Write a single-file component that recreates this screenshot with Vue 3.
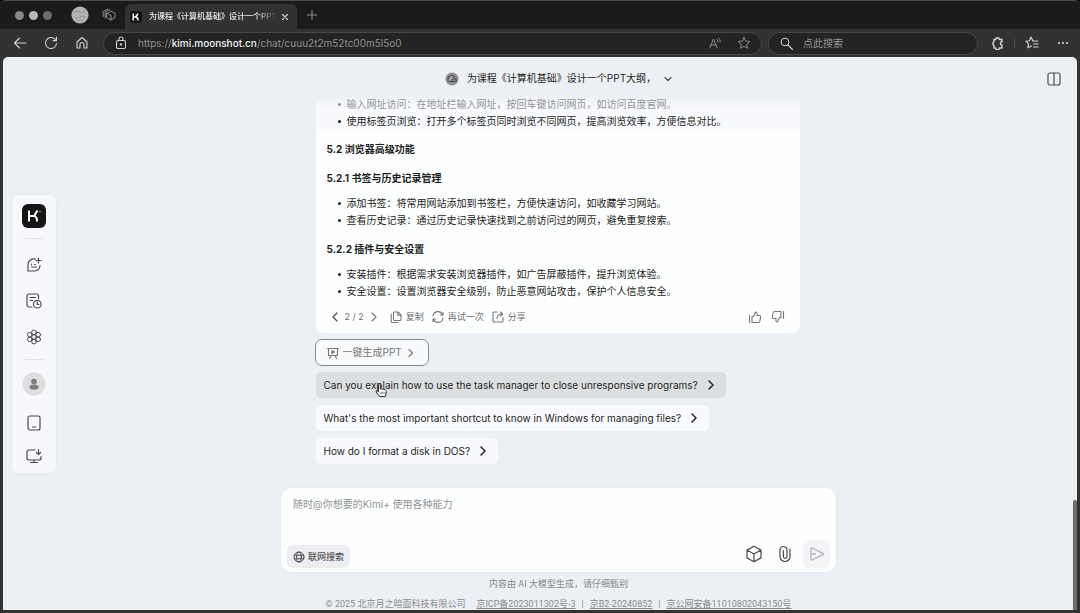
<script setup>
import { ref } from 'vue'

const draft = ref('')
const query = ref('')

const intro = [
  '输入网址访问：在地址栏输入网址，按回车键访问网页，如访问百度官网。',
  '使用标签页浏览：打开多个标签页同时浏览不同网页，提高浏览效率，方便信息对比。'
]
const bookmarks = [
  '添加书签：将常用网站添加到书签栏，方便快速访问，如收藏学习网站。',
  '查看历史记录：通过历史记录快速找到之前访问过的网页，避免重复搜索。'
]
const plugins = [
  '安装插件：根据需求安装浏览器插件，如广告屏蔽插件，提升浏览体验。',
  '安全设置：设置浏览器安全级别，防止恶意网站攻击，保护个人信息安全。'
]
const questions = [
  { text: 'Can you explain how to use the task manager to close unresponsive programs?', hovered: true },
  { text: "What's the most important shortcut to know in Windows for managing files?", hovered: false },
  { text: 'How do I format a disk in DOS?', hovered: false }
]
</script>

<template>
  <div class="window">
    <div class="tabs">
      <div class="lights"><i class="light"></i><i class="light bright"></i><i class="light dim"></i></div>
      <button class="bare profile" aria-label="个人资料">
        <svg width="18" height="18" viewBox="0 0 18 18"><circle cx="9" cy="9" r="8.6" fill="#b4b4b4" /><path d="M2 7q4-3 7-1t6-2M3 11q3 2 6 0t6 1M6 15q3-2 6 0" fill="none" stroke="#989898" stroke-width="1.2" /></svg>
      </button>
      <button class="bare spaces" aria-label="工作区">
        <svg class="line" width="14" height="14" viewBox="0 0 14 14"><path d="M5 5.3 9 3l4 2.3v4.4L9 12 5 9.700zM5 5.300l4 2.300M9 12V7.600M3.200 9.800V4L7.800 1.500M1.200 8.500V3.500L5.800 1" /></svg>
      </button>
      <div class="tab">
        <svg class="favicon" width="12" height="12" viewBox="0 0 12 12"><rect width="12" height="12" rx="3" fill="#141414" /><path d="M3.200 2.500v7M3.500 6h2L8 2.700M5.500 6Q8 6 8 9.500" fill="none" stroke="#fff" stroke-width="1.500" /></svg>
        <span class="tab-title">为课程《计算机基础》设计一个PPT</span>
        <button class="bare" aria-label="关闭标签页">
          <svg class="line light-line" width="8" height="8" viewBox="0 0 8 8"><path d="m1.500 1.500 5 5m0-5-5 5" /></svg>
        </button>
      </div>
      <button class="bare plus" aria-label="新建标签页">
        <svg class="line" width="10" height="10" viewBox="0 0 10 10"><path d="M5 0v10M0 5h10" /></svg>
      </button>
    </div>

    <div class="toolbar">
      <div class="nav">
        <button class="bare" aria-label="返回"><svg class="line light-line" width="14" height="14" viewBox="0 0 14 14"><path d="M13 7H1.500m5-5-5 5 5 5" /></svg></button>
        <button class="bare" aria-label="刷新"><svg class="line light-line" width="14" height="14" viewBox="0 0 14 14"><path d="M12.500 7.500A5.500 5.500 0 1 1 11 3.200L12.300 4.500M12.500 1v3.600H9" /></svg></button>
        <button class="bare" aria-label="主页"><svg class="line light-line" width="14" height="14" viewBox="0 0 14 14"><path d="M2 6 7 1.500 12 6v6H9V8.500a2 2 0 0 0-4 0V12H2z" /></svg></button>
      </div>
      <div class="pill address">
        <svg class="line light-line" width="12" height="14" viewBox="0 0 12 14"><rect x="1.500" y="4.500" width="9" height="8" rx="1.500" /><path d="M4 4.500V3a2 2 0 0 1 4 0v1.500" /><circle cx="6" cy="8.500" r=".6" fill="#ddd" /></svg>
        <span class="url">https://<b>kimi.moonshot.cn</b>/chat/cuuu2t2m52tc00m5l5o0</span>
        <button class="bare" aria-label="大声朗读"><svg class="line" width="12" height="12" viewBox="0 0 12 12"><path d="m.8 11 3.700-9 3.700 9M2 8h5M8 2.500q1.200 1 1 2.500M9.500 1q2 1.500 1.800 4" /></svg></button>
        <button class="bare" aria-label="收藏"><svg class="line" width="14" height="14" viewBox="0 0 14 14"><path d="m7 1.300 1.700 3.800 4.100.4-3.100 2.700.9 4.100L7 10.200l-3.600 2.100.9-4.100-3.100-2.700 4.100-.4z" /></svg></button>
      </div>
      <label class="pill search">
        <svg class="line light-line" width="13" height="13" viewBox="0 0 13 13"><circle cx="5" cy="5" r="3.800" /><path d="m8 8 4.500 4.500" /></svg>
        <input v-model="query" type="text" aria-label="搜索" placeholder="点此搜索" />
      </label>
      <div class="tools">
        <button class="bare" aria-label="扩展"><svg class="line light-line thick" width="13" height="14" viewBox="0 0 13 14"><path d="M3 3.500h1.700a1.800 1.800 0 0 1 3.600 0H11v2.300a1.600 1.600 0 0 0 0 3.200V12H8.300a1.800 1.800 0 0 1-3.600 0H3V9.500a2 2 0 0 1 0-3.700z" /></svg></button>
        <i class="divider"></i>
        <button class="bare" aria-label="收藏夹"><svg class="line light-line" width="14" height="14" viewBox="0 0 14 14"><path d="M8 5 6 1 4.500 4.700.8 5.200l2.800 2.600-.8 4L6.500 10M7.500 5h5.500M8.500 8H13M8.500 11H13" /></svg></button>
        <button class="bare" aria-label="更多"><svg width="12" height="4" viewBox="0 0 12 4" fill="#ddd"><circle cx="2" cy="2" r="1" /><circle cx="6" cy="2" r="1" /><circle cx="10" cy="2" r="1" /></svg></button>
      </div>
    </div>

    <div class="page">
      <nav class="side" aria-label="侧边栏">
        <a class="logo" href="#" aria-label="Kimi">
          <svg width="24" height="24" viewBox="0 0 24 24"><rect width="24" height="24" rx="6" fill="#151515" /><path d="M7 6.500v11M7.500 12H12l3.500-5.500M12 12q3 0 3 5.500" fill="none" stroke="#fff" stroke-width="2" /><circle cx="18" cy="7.500" r=".8" fill="#aaa" /></svg>
        </a>
        <hr class="rule" />
        <div class="side-main">
          <button class="bare" aria-label="新建会话"><svg class="dark-line" width="16" height="16" viewBox="0 0 16 16"><path d="M9.500 2A6 6 0 0 0 2 7.800V14h6.500A6 6 0 0 0 14 8.700M12.500 1v5M10 3.500h5M5.500 7.200v.6M5.500 10h5M8.500 7.500h1" /></svg></button>
          <button class="bare" aria-label="历史会话"><svg class="dark-line" width="16" height="16" viewBox="0 0 16 16"><path d="M6 14H3a2 2 0 0 1-2-2V3a2 2 0 0 1 2-2h7.500a2 2 0 0 1 2 2v2.500M4 4.500h5.500M4 7.500h2.500M11.300 9v2.500H13" /><circle cx="11.300" cy="11.200" r="3.800" /></svg></button>
          <button class="bare" aria-label="智能体"><svg class="dark-line fine" width="16" height="16" viewBox="0 0 16 16"><circle cx="8" cy="8" r="2.300" /><circle cx="8" cy="3.300" r="2.300" /><circle cx="8" cy="12.700" r="2.300" /><circle cx="3.800" cy="5.700" r="2.300" /><circle cx="12.200" cy="5.700" r="2.300" /><circle cx="3.800" cy="10.300" r="2.300" /><circle cx="12.200" cy="10.300" r="2.300" /></svg></button>
        </div>
        <hr class="rule low" />
        <button class="bare" aria-label="账户"><svg width="24" height="24" viewBox="0 0 24 24"><circle cx="12" cy="12" r="11.500" fill="#dcdee0" /><g fill="#7f7b7a"><circle cx="12" cy="9.500" r="2.800" /><ellipse cx="12" cy="15" rx="4.500" ry="2.600" /></g></svg></button>
        <div class="side-apps">
          <button class="bare" aria-label="手机应用"><svg class="dark-line" width="16" height="16" viewBox="0 0 16 16"><rect x="2" y="1" width="12" height="14" rx="2" /><path d="M6.500 12h3" /></svg></button>
          <button class="bare" aria-label="桌面应用"><svg class="dark-line" width="16" height="16" viewBox="0 0 16 16"><path d="M9 2H3a2 2 0 0 0-2 2v6a2 2 0 0 0 2 2h10a2 2 0 0 0 2-2V8.500M8 12v2.500M4.500 14.500h7M12.500 1.500v5M10.500 4.500l2 2 2-2" /></svg></button>
        </div>
      </nav>

      <main class="main">
        <header class="header">
          <button class="bare title">
            <svg width="14" height="14" viewBox="0 0 14 14"><circle cx="7" cy="7" r="6.500" fill="#8f8f8f" /><path d="M3 8.500q0-5 4-5 2.500 0 2.500 3.500M3.500 9.500H11V7H7.500v2" fill="#a8a8a8" stroke="#4a4a4a" stroke-width="1.200" /></svg>
            <span>为课程《计算机基础》设计一个PPT大纲，</span>
            <svg class="dark-line" width="8" height="8" viewBox="0 0 8 8"><path d="m1 2.500 3 3 3-3" /></svg>
          </button>
          <button class="bare panel" aria-label="分栏"><svg class="dark-line" width="14" height="14" viewBox="0 0 14 14"><rect x="1" y="1" width="12" height="12" rx="2" /><path d="M7 1v12" /></svg></button>
        </header>

        <section class="chat">
          <article class="card">
            <ul class="points fading"><li v-for="t in intro" :key="t">{{ t }}</li></ul>
            <h3>5.2 浏览器高级功能</h3>
            <h4>5.2.1 书签与历史记录管理</h4>
            <ul class="points"><li v-for="t in bookmarks" :key="t">{{ t }}</li></ul>
            <h4>5.2.2 插件与安全设置</h4>
            <ul class="points"><li v-for="t in plugins" :key="t">{{ t }}</li></ul>
            <div class="actions">
              <div class="pager">
                <button class="bare" aria-label="上一条"><svg class="dark-line" width="6" height="10" viewBox="0 0 6 10"><path d="M5 1 1 5l4 4" /></svg></button>
                <span>2 / 2</span>
                <button class="bare" aria-label="下一条"><svg class="gray-line" width="6" height="10" viewBox="0 0 6 10"><path d="m1 1 4 4-4 4" /></svg></button>
              </div>
              <button class="bare act"><svg class="gray-line" width="12" height="12" viewBox="0 0 12 12"><path d="M4 1h4l3 3v4.500a1 1 0 0 1-1 1H4.500a1 1 0 0 1-1-1V1.500M7.800 1v3.200H11M1.200 3v7.500a1 1 0 0 0 1 1H8" /></svg>复制</button>
              <button class="bare act"><svg class="gray-line" width="12" height="12" viewBox="0 0 12 12"><path d="M1 5a5 5 0 0 1 9.500-1.500M11 1.500V4H8.300M11 7a5 5 0 0 1-9.500 1.500M1 10.500V8h2.700" /></svg>再试一次</button>
              <button class="bare act"><svg class="gray-line" width="12" height="12" viewBox="0 0 12 12"><path d="M5 1H2a1 1 0 0 0-1 1v8a1 1 0 0 0 1 1h8a1 1 0 0 0 1-1V6.500M5 7.500q0-4.500 5.500-4.500M8.500 1l2.200 2-2.200 2" /></svg>分享</button>
              <div class="votes">
                <button class="bare" aria-label="赞"><svg class="gray-line" width="14" height="14" viewBox="0 0 14 14"><path d="M1.500 5.500v7M4 12.500v-6h1.500L7.500 2q2 0 1.500 3.500h2.500a1.300 1.300 0 0 1 1.200 1.600l-1 4.400a1.300 1.300 0 0 1-1.200 1z" /></svg></button>
                <button class="bare" aria-label="踩"><svg class="gray-line" width="14" height="14" viewBox="0 0 14 14"><path d="M12.500 1.500v7M10 1.500v6H8.500l-2 4.500Q4.500 12 5 8.500H2.500a1.300 1.300 0 0 1-1.200-1.600l1-4.400a1.300 1.300 0 0 1 1.200-1z" /></svg></button>
              </div>
            </div>
          </article>

          <button class="ppt">
            <svg class="gray-line" width="12" height="12" viewBox="0 0 12 12"><path d="M.5 1.500h11M1.500 1.500v7h9v-7M5 3.500 7.500 5 5 6.500zM4 8.500l-1.500 3M8 8.500l1.500 3" /></svg>
            <span>一键生成PPT</span>
            <svg class="gray-line" width="6" height="10" viewBox="0 0 6 10"><path d="m1 1.500 3.500 3.500L1 8.500" /></svg>
          </button>

          <button v-for="q in questions" :key="q.text" class="question" :class="{ hovered: q.hovered }">
            {{ q.text }}
            <svg class="black-line" width="6" height="10" viewBox="0 0 6 10"><path d="m1 1 4 4-4 4" /></svg>
            <svg v-if="q.hovered" class="pointer" width="13" height="15" viewBox="0 0 13 15"><path d="M4.500 13.500 1.200 9Q.5 7.500 2 7.800l1.500 1V2q.9-1.500 1.800 0v4q.9-1 1.800.2.900-.9 1.800.4 1.100-.6 1.800.7.8.5.5 3.200l-1 3z" fill="#f4f4f4" stroke="#333" /><path d="M6 9v2m2-2v2m2-2v2" stroke="#555" stroke-width=".8" /></svg>
          </button>
        </section>

        <form class="composer" @submit.prevent>
          <textarea v-model="draft" aria-label="消息" placeholder="随时@你想要的Kimi+ 使用各种能力"></textarea>
          <div class="composer-row">
            <button type="button" class="web"><svg class="dark-line fine" width="12" height="12" viewBox="0 0 12 12"><circle cx="6" cy="6" r="5" /><ellipse cx="6" cy="6" rx="2.300" ry="5" /><path d="M1.500 4.200h9M1.500 7.800h9" /></svg>联网搜索</button>
            <button type="button" class="bare cube" aria-label="工具"><svg class="dark-line" width="18" height="18" viewBox="0 0 18 18"><path d="m9 1.300 7 3.800v7.800l-7 3.800-7-3.800V5.100zM2 5.100l7 3.900 7-3.900M9 9v7.700" /></svg></button>
            <button type="button" class="bare" aria-label="附件"><svg class="dark-line" width="14" height="18" viewBox="0 0 14 18"><path d="M12 4v7.500a5 5 0 0 1-10 0V5a3.500 3.500 0 0 1 7 0v6.500a1.800 1.800 0 0 1-3.600 0V5.500" /></svg></button>
            <button class="send" aria-label="发送"><svg width="16" height="16" viewBox="0 0 16 16" fill="none" stroke="#b4b4b8" stroke-width="1.300" stroke-linejoin="round"><path d="M2 2.500Q2 1.500 3 2l11 5.300q1 .7 0 1.400L3 14q-1 .5-1-.5zM2 8h5" /></svg></button>
          </div>
        </form>

        <footer class="footer">
          <p>内容由 AI 大模型生成，请仔细甄别</p>
          <p class="legal">
            <span class="owner">© 2025 北京月之暗面科技有限公司</span>
            <a href="#">京ICP备2023011302号-3</a><span>|</span>
            <a href="#">京B2-20240852</a><span>|</span>
            <a href="#">京公网安备11010802043150号</a>
          </p>
        </footer>
      </main>
      <i class="thumb"></i>
    </div>
  </div>
</template>

<style>
body { background: #111; }
</style>

<style scoped>
* { box-sizing: border-box; }
.window {
  display: flex; flex-direction: column; min-height: 100vh; overflow: hidden;
  background: #323232; border-top: 1px solid #4c4c4c; border-radius: 6px 6px 0 0;
  padding-bottom: 3px; color: #1e1f22;
  font: 10px/17px Inter, "Noto Sans CJK SC", sans-serif;
}
svg { display: block; flex: none; }
button { font: inherit; color: inherit; cursor: pointer; }
.bare { display: flex; align-items: center; justify-content: center; padding: 0; border: 0; background: none; }
.line, .dark-line, .gray-line, .black-line { fill: none; stroke-linecap: round; stroke-linejoin: round; }
.line { stroke: #8e8e8e; }
.light-line { stroke: #d4d4d4; stroke-width: 1.1; }
.thick { stroke-width: 1.4; }
.dark-line { stroke: #4b4b4d; stroke-width: 1.2; }
.fine { stroke-width: 1; }
.gray-line { stroke: #77777a; stroke-width: 1.1; }
.black-line { stroke: #222; stroke-width: 1.5; }

.tabs { display: flex; align-items: center; height: 28px; padding-left: 15px; background: #1b1b1b; }
.lights { display: flex; gap: 5px; margin-right: 19px; }
.light { width: 9px; height: 9px; border-radius: 50%; background: #8d8585; }
.light.bright { background: #b9b9b9; }
.light.dim { background: #6d6d6d; }
.spaces { margin: 0 9px 0 13px; }
.tab { display: flex; align-items: center; gap: 4px; align-self: flex-end; width: 172px; height: 25px; padding: 0 8px 0 5px; border-radius: 6px 6px 0 0; background: #323232; }
.favicon { margin-right: 3px; }
.tab-title { flex: 1; white-space: nowrap; font-size: 8px; font-weight: 500; color: #e8e8e8; mask-image: linear-gradient(90deg, #000 84%, transparent); }
.plus { margin-left: 10px; }

.toolbar { display: flex; align-items: center; height: 28px; padding: 0 11px 0 13px; }
.nav { display: flex; gap: 17px; margin-right: 14px; }
.pill { display: flex; align-items: center; height: 23px; border: 1px solid #484848; border-radius: 12px; background: #232323; color: #929292; }
.address { flex: 1; padding: 0 10px 0 11px; gap: 16px; }
.url { flex: 1; margin-left: -5px; white-space: nowrap; }
.url b { font-weight: 500; color: #f2f2f2; }
.search { flex: 0 1 210px; gap: 10px; margin-left: 6px; padding: 0 11px; }
.search input { flex: 1; min-width: 0; padding: 0; border: 0; outline: 0; background: none; font: inherit; color: #ddd; }
.search input::placeholder { color: #999; }
.tools { display: flex; align-items: center; gap: 10px; margin-left: 13px; }
.tools .bare:last-child { margin-left: 8px; }
.divider { width: 1px; height: 9px; background: #555; }

.page { position: relative; flex: 1; display: flex; margin: 0 3px; padding: 0 16px 0 9px; border-radius: 5px 5px 0 0; background: #ecf0f4; overflow: hidden; }
.side { display: flex; flex-direction: column; align-items: center; align-self: center; width: 44px; padding: 9px 0 5px; border-radius: 7px; background: #f7f8fc; box-shadow: 0 0 4px #e3e7eb; }
.rule { width: 18px; height: 1px; margin: 10px 0 14px; border: 0; background: #e2e4e8; }
.rule.low { margin-bottom: 12px; }
.side .bare { width: 24px; height: 24px; }
.side-main { display: grid; gap: 12px; }
.side-apps { display: grid; gap: 9px; margin-top: 15px; }

.main { flex: 1; min-width: 0; display: flex; flex-direction: column; }
.header { display: grid; grid-template-columns: 1fr auto 1fr; align-items: center; height: 39px; padding-top: 4px; }
.title { grid-column: 2; gap: 8px; }
.panel { justify-self: end; }

.chat { flex: 1; display: flex; flex-direction: column; align-items: flex-start; width: 100%; max-width: 486px; margin: 0 auto; padding-right: 2px; }
.card { width: 100%; padding: 0 12px 8px 11px; border-radius: 0 0 7px 7px; background: linear-gradient(#ecf0f4, #f9fafd 12px, #f9fafd 34px, #fdfefe 35px); }
.points { list-style: none; margin: 8px 0 0; padding: 0 0 0 11px; }
.points.fading { margin-top: 0; }
.points li { display: flex; align-items: center; gap: 6px; }
.points li::before { content: ""; width: 3px; height: 3px; border-radius: 50%; background: currentColor; }
.fading li:first-child { color: #939497; }
h3, h4 { margin: 12px 0 0; font-size: 10px; font-weight: 700; line-height: 17px; }
h3 { margin-top: 11px; }
.actions { display: flex; align-items: center; gap: 8px; height: 17px; margin-top: 8px; font-size: 9px; color: #717174; }
.pager { display: flex; align-items: center; gap: 7px; margin: 0 5px; }
.act { gap: 4px; }
.votes { display: flex; gap: 9px; margin: 0 3px 0 auto; }
.ppt { display: flex; align-items: center; gap: 4px; height: 27px; margin: 6px 0 0 -1px; padding: 0 14px 0 11px; border: 1px solid #858b90; border-radius: 7px; background: #f9fafc; color: #77777a; }
.ppt svg:last-child { margin-left: 2px; }
.question { position: relative; display: flex; align-items: center; gap: 10px; height: 26px; margin-top: 7px; padding: 0 12px 0 8px; border: 0; border-radius: 5px; background: #f9fafd; }
.ppt + .question { margin-top: 6px; }
.question.hovered { background: #dcdfe2; }
.pointer { position: absolute; left: 59px; top: 11px; }

.composer { display: flex; flex-direction: column; width: 100%; max-width: 555px; margin: 0 auto; padding: 8px 6px 4px; border-radius: 10px; background: #fdfefe; box-shadow: 0 0 3px #dfe3e7; }
.composer textarea { height: 44px; padding: 0 6px; border: 0; outline: 0; resize: none; background: none; font: inherit; color: #222; }
.composer textarea::placeholder { color: #929397; }
.composer-row { display: flex; align-items: center; gap: 11px; }
.web { display: flex; align-items: center; align-self: flex-end; gap: 3px; height: 23px; padding: 0 6px; border: 0; border-radius: 6px; background: #eceef2; font-size: 9px; font-weight: 500; color: #58585b; }
.cube { margin: 0 4px 0 auto; }
.send { display: flex; align-items: center; justify-content: center; width: 27px; height: 28px; padding: 0; border: 0; border-radius: 7px; background: #f3f4f8; }

.footer { padding-top: 4px; font: 9px/17px Roboto, "Noto Sans CJK SC", sans-serif; color: #87898c; text-align: center; }
.footer p { margin: 0; }
.footer .legal { display: flex; justify-content: center; gap: 6px; margin-top: 3px; height: 14px; }
.owner { margin-right: 5px; }
.legal a { color: inherit; text-decoration: underline; }
.thumb { position: absolute; right: 0; bottom: 0; width: 4px; height: 110px; border-radius: 2px 2px 0 0; background: #6c6d6e; }
</style>
